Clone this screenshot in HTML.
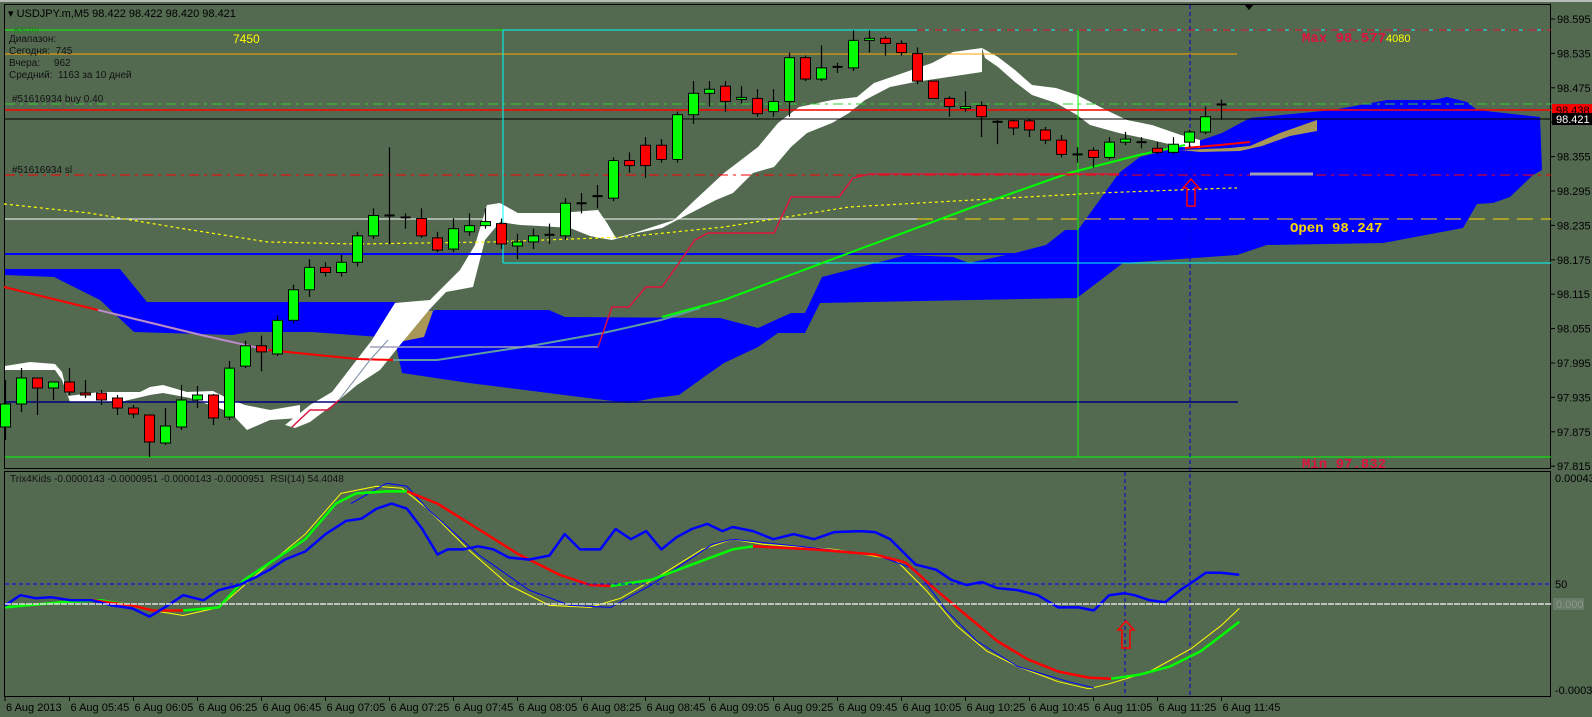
<!DOCTYPE html>
<html><head><meta charset="utf-8">
<style>
html,body{margin:0;padding:0;background:#536a51;}
svg{display:block;}
text{font-family:"Liberation Sans","DejaVu Sans",sans-serif;}
.ax{font-size:11px;fill:#000;}
.mono{font-family:"Liberation Mono",monospace;font-weight:bold;font-size:14px;}
</style></head>
<body>
<svg id="s" width="1592" height="717" viewBox="0 0 1592 717" xmlns="http://www.w3.org/2000/svg">
<rect width="1592" height="717" fill="#536a51"/>
<rect x="0" y="0" width="1592" height="2" fill="#b8bcb8"/>
<!-- frames -->
<rect x="4.5" y="4.5" width="1546" height="464" fill="none" stroke="#000" stroke-width="1"/>
<rect x="4.5" y="471.5" width="1546" height="225" fill="none" stroke="#000" stroke-width="1"/>

<!-- blue cloud -->
<polygon fill="#0000ff" points="5,269 120,269 147,302 393,302 433,311 435,310 549,310 565,317 720,318 758,328 791,313 805,313 822,277 907,255 953,257 969,263 1015,253 1046,245 1065,230 1078,230 1119,173 1140,157 1181,147 1222,133 1250,118 1333,110 1387,100 1434,100 1447,97 1467,102 1477,110 1540,117 1542,170 1533,175 1510,197 1493,203 1477,204 1463,228 1383,243 1267,245 1237,255 1123,263 1077,298 820,303 805,333 778,333 758,347 724,363 704,377 679,395 654,398 629,403 580,397 469,383 402,373 396,345 380,337 312,332 250,332 232,335 134,332 100,300 54,277 5,275"/>
<polygon fill="#a89858" points="393,306 433,311 424,337 384,345 370,343"/>
<polygon fill="#a89858" points="1180,150 1230,148 1250,146 1280,133 1317,120 1317,131 1290,136 1262,146 1240,151 1200,152"/>

<!-- white bands -->
<polygon fill="#fff" points="5,366 30,362 55,364 62,372 68,396 100,392 140,392 150,387 163,385 187,392 213,391 227,398 245,405 270,410 300,405 300,418 270,420 247,430 230,412 210,405 190,398 163,393 150,395 120,402 90,402 70,402 62,380 55,370 30,370 5,370"/>
<polygon fill="#fff" points="285,425 310,405 332,392 372,340 395,303 430,300 460,270 475,245 487,205 500,203 518,213 560,213 598,210 607,223 616,238 634,233 674,220 695,200 724,173 758,147 778,123 799,107 832,100 857,97 874,83 903,73 932,63 953,52 982,48 982,72 915,82 890,87 865,100 849,113 832,123 807,133 791,147 774,167 753,173 733,193 716,200 683,217 662,228 637,233 612,240 600,238 590,236 570,228 540,226 520,225 500,222 485,240 473,287 446,292 429,310 400,345 380,370 357,385 339,400 310,422 295,428"/>
<polygon fill="#fff" points="982,48 998,57 1015,70 1032,85 1056,88 1077,95 1106,110 1127,120 1152,125 1181,135 1200,140 1200,148 1181,147 1152,140 1119,133 1090,125 1077,115 1056,103 1032,95 1015,82 998,67 985,58"/>

<!-- horizontal lines -->
<line x1="5" y1="30" x2="503" y2="30" stroke="#00ff00"/>
<line x1="503" y1="30" x2="917" y2="30" stroke="#00ffff"/>
<line x1="917" y1="30" x2="1551" y2="30" stroke="#dc143c" stroke-dasharray="14,4"/>
<line x1="925" y1="30" x2="1551" y2="30" stroke="#00ffff" stroke-dasharray="4,14"/>
<line x1="5" y1="54" x2="1237" y2="54" stroke="#ffa500"/>
<line x1="5" y1="104" x2="1551" y2="104" stroke="#32cd32" stroke-dasharray="10,5,3,5"/>
<line x1="5" y1="110" x2="1551" y2="110" stroke="#ff0000" stroke-width="1.5"/>
<line x1="5" y1="119" x2="1551" y2="119" stroke="#000"/>
<line x1="5" y1="175" x2="1551" y2="175" stroke="#ff0000" stroke-dasharray="10,5,3,5"/>
<line x1="5" y1="219" x2="917" y2="219" stroke="#fff"/>
<line x1="917" y1="219" x2="1551" y2="219" stroke="#ffd700" stroke-dasharray="16,8"/>
<line x1="5" y1="254" x2="1238" y2="254" stroke="#0000ff" stroke-width="2"/>
<line x1="503" y1="263" x2="1551" y2="263" stroke="#00ffff"/>
<line x1="503" y1="30" x2="503" y2="263" stroke="#00ffff"/>
<line x1="5" y1="402" x2="1238" y2="402" stroke="#000080" stroke-width="1.5"/>
<line x1="5" y1="457" x2="1551" y2="457" stroke="#00ff00"/>
<line x1="5" y1="456" x2="1551" y2="456" stroke="#dc143c" stroke-dasharray="16,6" opacity="0"/>
<line x1="1078" y1="30" x2="1078" y2="457" stroke="#00ff00"/>
<line x1="1190" y1="5" x2="1190" y2="697" stroke="#0000cc" stroke-dasharray="4,3"/>
<line x1="1125" y1="472" x2="1125" y2="697" stroke="#0000cc" stroke-dasharray="4,3"/>
<line x1="1250" y1="174" x2="1313" y2="174" stroke="#a0a0b0" stroke-width="3"/>

<!-- MA lines -->
<polyline fill="none" stroke="#ffff00" stroke-width="1.2" stroke-dasharray="3,3" points="4,204 89,213 179,228 268,242 357,244 491,242 625,237 724,227 849,207 973,200 1098,193 1231,188 1237,188"/>
<polyline fill="none" stroke="#ff0000" stroke-width="2" points="4,287 98,310 201,335 268,350 357,359 393,360"/>
<polyline fill="none" stroke="#b090d0" stroke-width="2" points="98,310 201,335 268,350"/>
<polyline fill="none" stroke="#5f9ea0" stroke-width="2" points="393,360 437,360 536,345 603,333 661,320 700,308"/>
<polyline fill="none" stroke="#00ff00" stroke-width="2" points="662,317 724,300 849,253 973,207 1069,173 1139,155 1185,145"/>
<polyline fill="none" stroke="#a0a0b8" stroke-width="1.5" points="370,347 598,347"/>
<polyline fill="none" stroke="#dc143c" stroke-width="1.5" points="292,427 310,410 328,410 339,400"/>
<polyline fill="none" stroke="#dc143c" stroke-width="1.5" points="598,347 612,307 629,307 646,287 662,287 695,240 708,233 774,233 791,197 839,197 853,178 870,174 1119,174"/>
<polyline fill="none" stroke="#8899aa" stroke-width="1.2" points="339,400 370,360 388,340"/>
<polyline fill="none" stroke="#ff0000" stroke-width="2" points="1185,148 1220,145 1250,142"/>

<g id="candles"></g>
<g id="ind"></g>

<!-- arrows -->
<path d="M1199,188 l-8,-9 l-8,9 h4 v18 h8 v-18 z" fill="none" stroke="#ff0000" stroke-width="1.5"/>
<path d="M1134,630 l-8,-9 l-8,9 h4 v18 h8 v-18 z" fill="none" stroke="#ff0000" stroke-width="1.5"/>
<path d="M1244,4 h10 l-5,6 z" fill="#000"/>

<!-- indicator ref lines -->
<line x1="5" y1="584" x2="1551" y2="584" stroke="#0000ff" stroke-dasharray="4,3"/>
<line x1="5" y1="604" x2="1551" y2="604" stroke="#e0e0e0" stroke-width="1.5" stroke-dasharray="6,1"/>

<!-- texts -->
<text x="8" y="17" font-size="11" fill="#000">▾ USDJPY.m,M5  98.422 98.422 98.420 98.421</text>
<text x="14" y="33" font-size="8" fill="#1a8a1a">BS(10)</text>
<text x="9" y="42" font-size="10" fill="#111">Диапазон:</text>
<text x="9" y="54" font-size="10" fill="#111" xml:space="preserve">Сегодня:  745</text>
<text x="9" y="66" font-size="10" fill="#111" xml:space="preserve">Вчера:     962</text>
<text x="9" y="78" font-size="10" fill="#111" xml:space="preserve">Средний:  1163 за 10 дней</text>
<text x="12" y="102" font-size="10" fill="#111">#51616934 buy 0.40</text>
<text x="12" y="173" font-size="10" fill="#111">#51616934 sl</text>
<text x="233" y="43" font-size="12" fill="#ffff00">7450</text>
<text x="1302" y="42" class="mono" fill="#dc143c">Max 98.577</text>
<text x="1386" y="42" font-size="11" fill="#ffff00">4080</text>
<text x="1290" y="232" class="mono" fill="#ffd700">Open 98.247</text>
<text x="1302" y="468" class="mono" fill="#dc143c">Min 97.832</text>
<text x="10" y="482" font-size="10" fill="#111" xml:space="preserve">Trix4Kids -0.0000143 -0.0000951 -0.0000143 -0.0000951  RSI(14) 54.4048</text>

<!-- price axis -->
<g id="pax"></g>
<rect x="1552" y="104" width="40" height="12" fill="#ff0000"/>
<text x="1556" y="114" class="ax" fill="#000">98.438</text>
<rect x="1552" y="113" width="40" height="12" fill="#000"/>
<text x="1556" y="123" class="ax" style="fill:#fff">98.421</text>
<text x="1555" y="482" class="ax">0.000439</text>
<text x="1555" y="588" class="ax">50</text>
<rect x="1553" y="598" width="31" height="12" fill="#6a7a68"/>
<text x="1556" y="608" class="ax" style="fill:#8a9a88">0.000</text>
<text x="1555" y="694" class="ax">-0.00031</text>
<g id="tax"></g>
</svg>
<script>
var NS="http://www.w3.org/2000/svg";
function el(p,t,a){var e=document.createElementNS(NS,t);for(var k in a)e.setAttribute(k,a[k]);p.appendChild(e);return e;}
var pax=document.getElementById('pax');
var pl=["98.595","98.535","98.475","","98.355","98.295","98.235","98.175","98.115","98.055","97.995","97.935","97.875","97.815"];
for(var i=0;i<pl.length;i++){var y=19+34.4*i;el(pax,'line',{x1:1551,y1:y,x2:1555,y2:y,stroke:'#000'});if(pl[i]){var t=el(pax,'text',{x:1557,y:y+4,'class':'ax'});t.textContent=pl[i];}}
var tax=document.getElementById('tax');
var tl=["6 Aug 2013","6 Aug 05:45","6 Aug 06:05","6 Aug 06:25","6 Aug 06:45","6 Aug 07:05","6 Aug 07:25","6 Aug 07:45","6 Aug 08:05","6 Aug 08:25","6 Aug 08:45","6 Aug 09:05","6 Aug 09:25","6 Aug 09:45","6 Aug 10:05","6 Aug 10:25","6 Aug 10:45","6 Aug 11:05","6 Aug 11:25","6 Aug 11:45"];
for(var i=0;i<tl.length;i++){var x=i==0?5:69.5+64*(i-1);el(tax,'line',{x1:x,y1:697,x2:x,y2:701,stroke:'#000'});var t=el(tax,'text',{x:x+1,y:711,'class':'ax'});t.textContent=tl[i];}
// candles: top,bottom,type,hi,lo (first 15 in true coords, rest est)
var C=[[404,427,'g',380,440],[378,404,'g',368,412],[378,388,'r',378,415],[382,388,'g',382,400],[382,392,'r',368,395],[393,395,'r',380,398],[393,400,'r',390,405],[398,408,'r',395,415],[408,414,'r',405,418],[415,442,'r',415,457],[426,443,'g',408,445],[400,427,'g',385,430],[395,400,'g',386,408],[395,418,'r',394,425],
[362,410,'g',355,413],[340,360,'g',335,362],[340,346,'r',330,365],[315,348,'g',310,350],[285,315,'g',280,318],[263,285,'g',255,292],[263,268,'r',258,272],[258,268,'g',250,272],[232,258,'g',228,262],[212,232,'g',205,235],[212,213,'d',145,240],[214,215,'d',210,225],[215,232,'r',205,234],[234,246,'r',228,248],[225,245,'g',215,248],[222,228,'g',210,232],[218,222,'g',205,225],[220,240,'r',215,245],[238,242,'g',230,255],[232,238,'g',225,245],[231,232,'d',220,240],[200,232,'g',195,236],[200,201,'d',190,210],[193,196,'d',182,205],[158,195,'g',155,198],[158,163,'r',150,170],[143,163,'r',135,175],[143,157,'r',137,160],[113,157,'g',110,160],[92,113,'g',80,122],[88,92,'g',80,105],[85,100,'r',80,110],[96,98,'g',85,102],[97,112,'r',88,115],[100,110,'g',88,115],[57,100,'g',52,115],[57,78,'r',55,80],[67,78,'g',45,80],[66,67,'d',62,72],[40,67,'g',30,70],[38,40,'g',30,52],[38,43,'r',36,55],[43,52,'r',40,55],[53,80,'r',47,83],[80,97,'r',80,97],[97,105,'r',95,115],[105,107,'g',90,110],[104,115,'r',100,135],[120,121,'d',118,142],[119,126,'r',118,133],[119,128,'r',117,135],[128,138,'r',125,142],[138,152,'r',133,155],[152,153,'d',145,160],[148,155,'r',145,165],[140,155,'g',135,157],[137,140,'g',130,143],[140,142,'d',135,146],[146,150,'r',140,152],[142,150,'g',135,152],[130,140,'g',128,145],[115,130,'g',105,132],[103,104,'d',98,118]];
var cg=document.getElementById('candles');
function ty(y,i){return i<14?y:19+(y-19)*1.018;}
for(var i=0;i<C.length;i++){var c=C[i],x=5.5+16*i;var t=ty(c[0],i),b=ty(c[1],i),h=ty(c[3],i),l=ty(c[4],i);
el(cg,'line',{x1:x,y1:h,x2:x,y2:l,stroke:'#000','stroke-width':1.2});
if(c[2]=='d'){el(cg,'line',{x1:x-5,y1:t,x2:x+5,y2:t,stroke:'#000','stroke-width':2});}
else el(cg,'rect',{x:x-5,y:t,width:10,height:Math.max(2,b-t),fill:c[2]=='g'?'#00ff00':'#ff0000',stroke:'#000','stroke-width':1});}
// indicator (est coords -> true)
var ig=document.getElementById('ind');
function tr(s){return s.trim().split(/\s+/).map(function(p){var a=p.split(',');return (a[0]*1.0175).toFixed(1)+','+(19+(a[1]-19)*1.018).toFixed(1);}).join(' ');}
function pl2(pts,col,w){el(ig,'polyline',{points:tr(pts),fill:'none',stroke:col,'stroke-width':w,'stroke-linejoin':'round'});}
pl2("5,597 60,592 100,590 130,595 150,600 180,605 215,597 260,558 300,525 335,485 370,478 395,480 420,500 460,540 500,575 540,595 580,597 610,588 650,565 690,540 720,530 750,535 820,540 880,550 910,580 940,615 970,640 1000,655 1040,670 1070,677 1090,672 1130,660 1170,638 1200,615 1218,598","#ffff00",1);
pl2("345,495 380,475 400,478 420,500 470,545 520,580 560,595 600,597 640,575 700,535 720,530 860,545 900,560 930,600 960,630 1000,655 1050,670 1075,676","#0000ff",1);
pl2("5,597 60,592 100,590 130,595 150,600 180,600","#00ff00",2.5);
pl2("90,590 130,595 150,600 180,600","#ff0000",2.5);
pl2("180,600 215,597 240,570 270,550 300,530 330,495 350,485 380,483 400,483","#00ff00",2.5);
pl2("400,483 430,495 470,520 510,545 550,565 580,575 600,576","#ff0000",2.5);
pl2("600,576 640,570 680,555 720,540 740,537","#00ff00",2.5);
pl2("740,537 800,540 860,545 890,553 920,580 950,605 980,630 1010,648 1040,660 1070,666 1092,667","#ff0000",2.5);
pl2("1092,667 1120,663 1150,655 1180,640 1200,625 1218,611","#00ff00",2.5);
pl2("5,595 20,585 35,588 50,587 70,590 90,590 110,595 130,598 147,606 165,595 180,585 200,590 215,580 235,575 250,568 265,560 280,550 300,542 320,525 340,512 355,510 370,500 385,495 400,500 415,520 430,545 440,540 455,540 470,537 485,540 500,548 520,550 540,546 555,525 570,540 590,540 605,520 620,530 635,522 650,540 665,528 680,520 695,515 710,522 720,518 740,522 760,530 780,525 800,530 820,523 845,522 860,523 875,530 890,545 900,555 920,560 935,570 950,575 965,572 980,578 1000,580 1020,585 1040,597 1060,597 1075,600 1090,585 1105,583 1115,585 1130,590 1145,592 1160,580 1175,570 1185,563 1200,563 1218,565","#0000ff",2.5);
</script>
</body></html>
